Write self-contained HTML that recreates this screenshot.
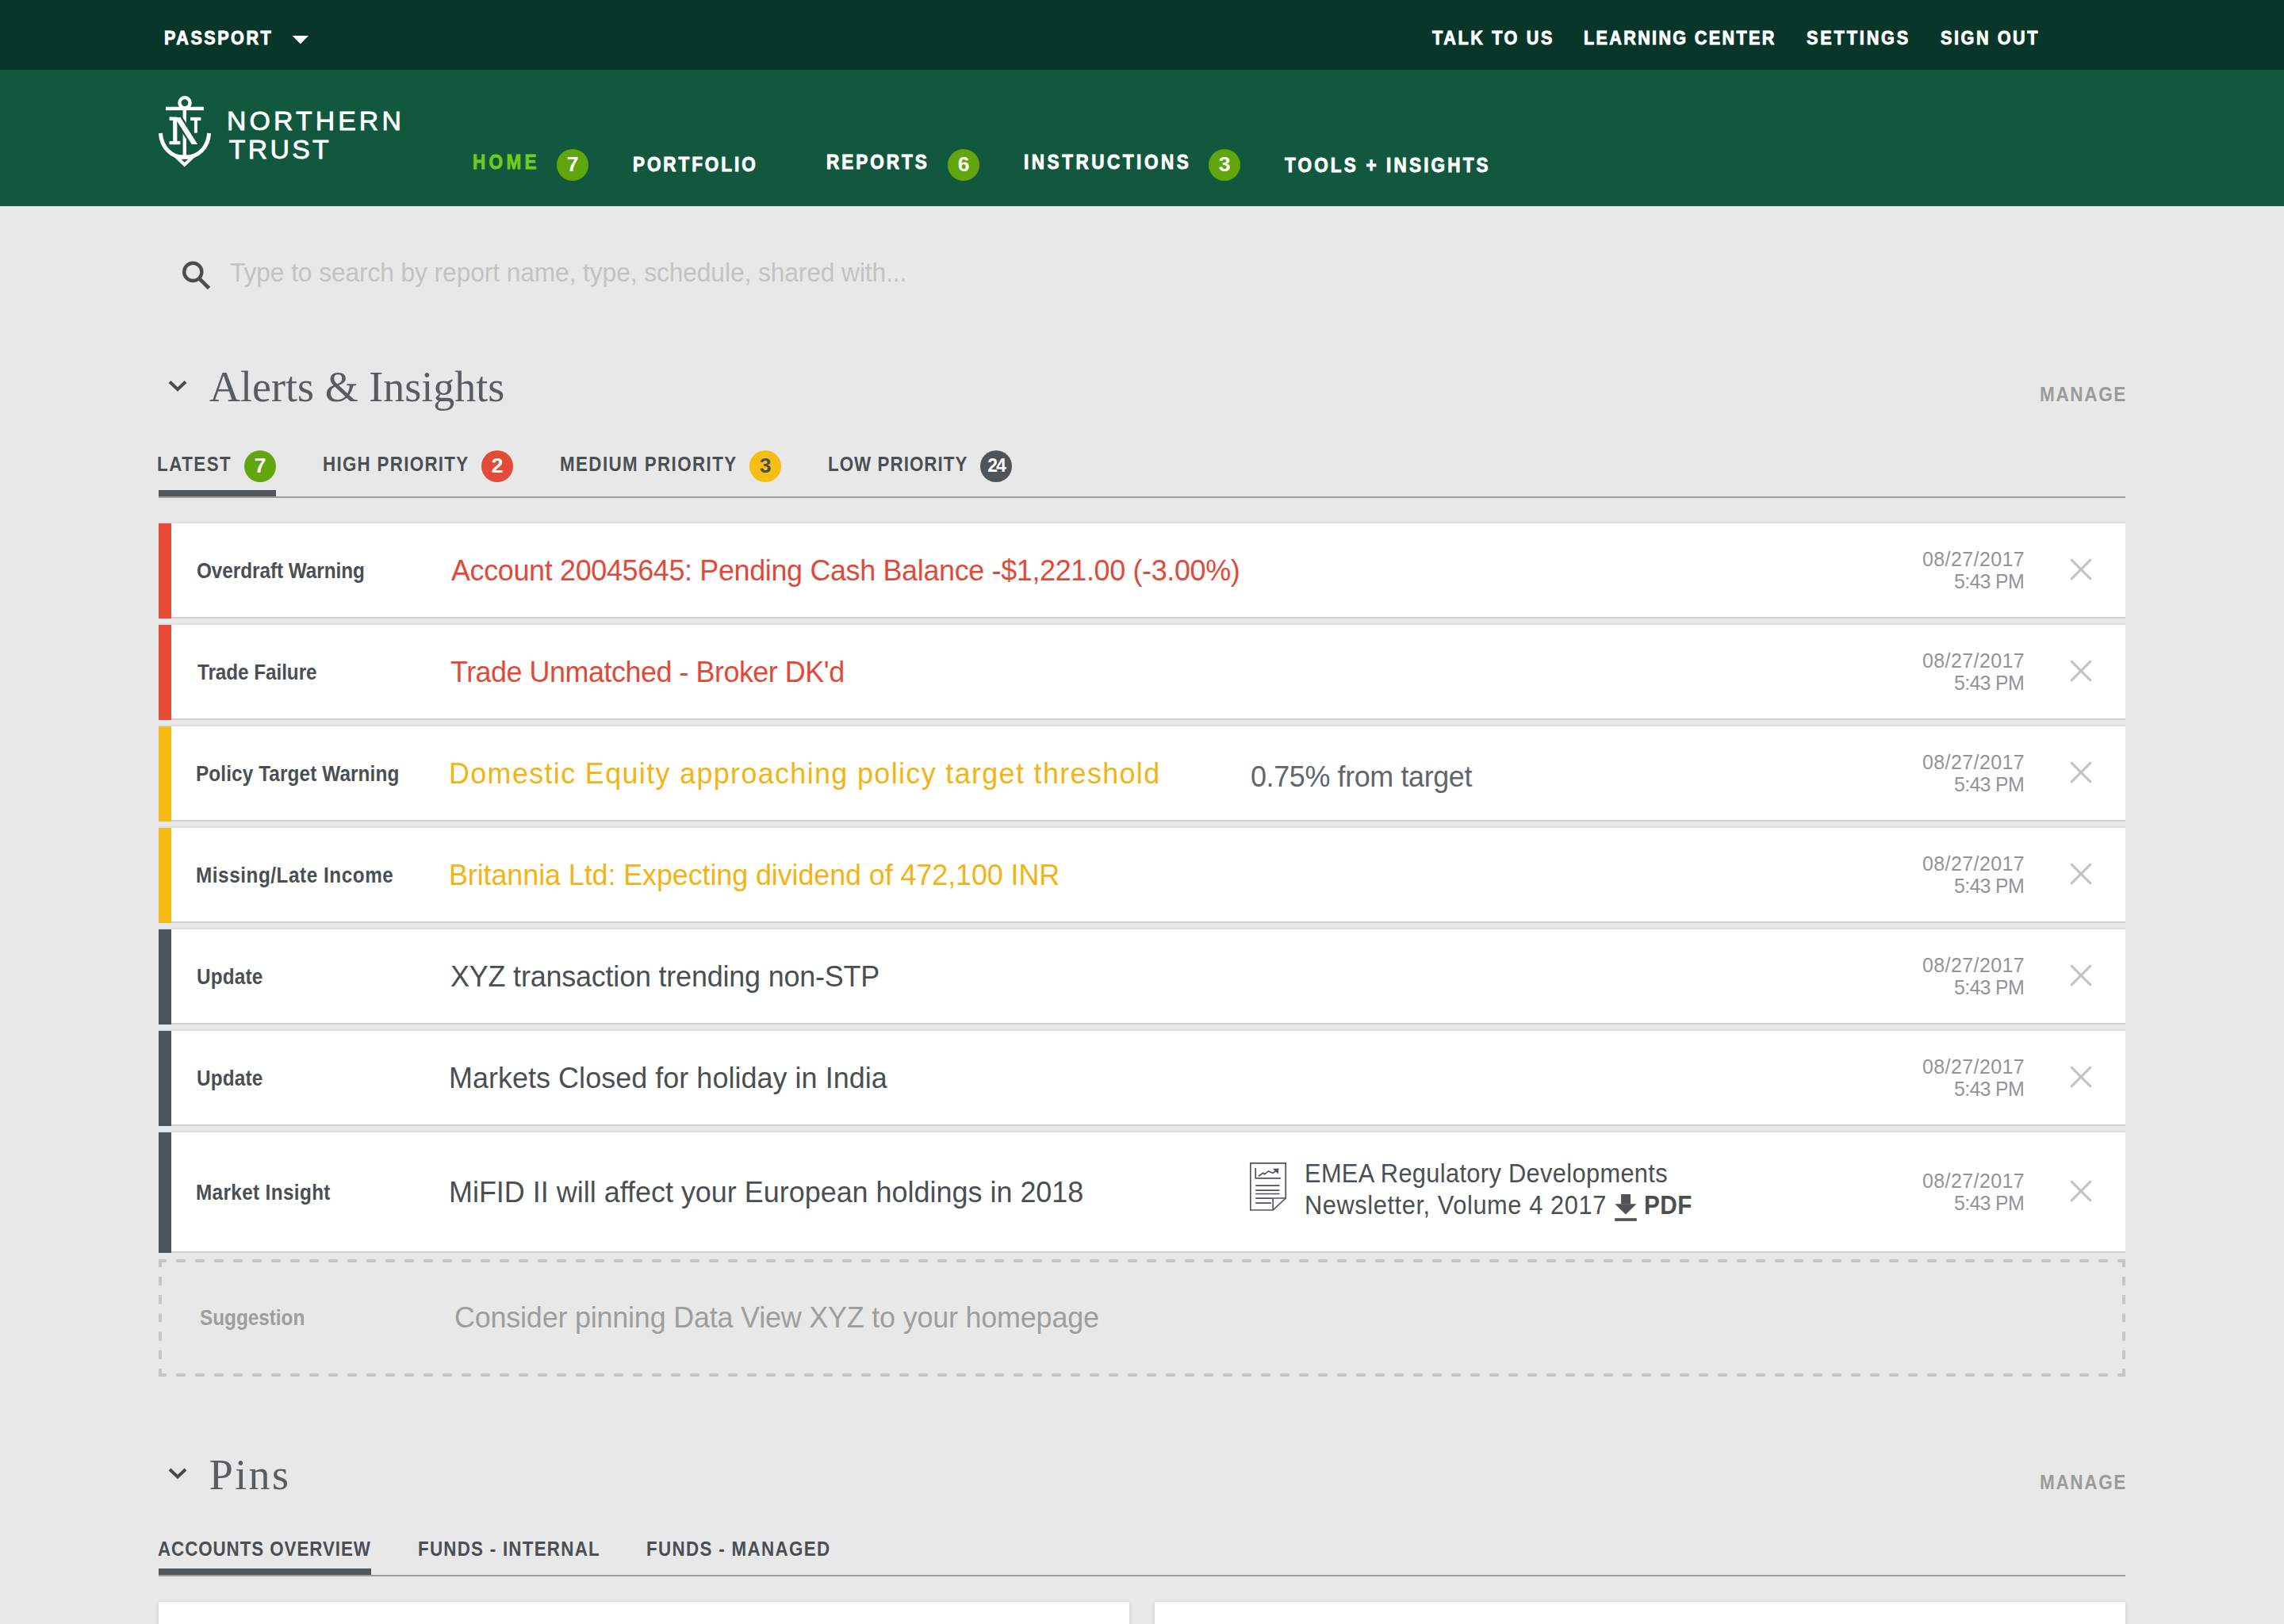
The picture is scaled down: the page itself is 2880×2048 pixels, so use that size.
<!DOCTYPE html>
<html><head><meta charset="utf-8"><title>Northern Trust Passport</title>
<style>
html,body{margin:0;padding:0}
body{width:2880px;height:2048px;overflow:hidden;background:#e8e8e8;position:relative;font-family:'Liberation Sans',sans-serif}
.t{position:absolute;line-height:1;white-space:nowrap}
.r{position:absolute}
.row{position:absolute;left:200px;width:2480px;background:#fff;box-shadow:0 2px 0 #d1d1d1,0 -2px 0 #e0e0e0}
.bar{position:absolute;left:0;top:0;width:16px;bottom:-2px}
.badge{position:absolute;width:40px;height:40px;border-radius:50%}
svg{position:absolute;left:0;top:0;overflow:visible}
@media (max-width:2000px){html{zoom:0.5}}
</style></head><body>
<div class="r" style="left:0;top:0;width:2880px;height:88px;background:#08372a"></div>
<div class="r" style="left:0;top:88px;width:2880px;height:172px;background:#12583f"></div>

<div class="row" style="top:660px;height:118px"><div class="bar" style="background:#e54b37"></div></div>
<div class="row" style="top:788px;height:118px"><div class="bar" style="background:#e54b37"></div></div>
<div class="row" style="top:916px;height:118px"><div class="bar" style="background:#f7bb16"></div></div>
<div class="row" style="top:1044px;height:118px"><div class="bar" style="background:#f7bb16"></div></div>
<div class="row" style="top:1172px;height:118px"><div class="bar" style="background:#4f5459"></div></div>
<div class="row" style="top:1300px;height:118px"><div class="bar" style="background:#4f5459"></div></div>
<div class="row" style="top:1428px;height:150px"><div class="bar" style="background:#4f5459"></div></div>
<div class="r" style="left:200px;top:2020px;width:1224px;height:60px;background:#fff;box-shadow:0 3px 6px rgba(0,0,0,0.14),0 -1px 1px rgba(0,0,0,0.04)"></div>
<div class="r" style="left:1456px;top:2020px;width:1224px;height:60px;background:#fff;box-shadow:0 3px 6px rgba(0,0,0,0.14),0 -1px 1px rgba(0,0,0,0.04)"></div>
<div class="r" style="left:200px;top:626px;width:2480px;height:2px;background:#9d9d9d"></div>
<div class="r" style="left:200px;top:618px;width:148px;height:8px;background:#53575c"></div>
<div class="r" style="left:200px;top:1986px;width:2480px;height:2px;background:#9d9d9d"></div>
<div class="r" style="left:200px;top:1978px;width:268px;height:8px;background:#53575c"></div>
<div class="badge" style="left:702px;top:188px;background:#62a60e"></div>
<div class="t" style="left:692px;top:187px;width:60px;height:40px;line-height:40px;text-align:center;font-weight:700;font-size:26.5px;letter-spacing:0px;color:#fff">7</div>
<div class="badge" style="left:1195px;top:188px;background:#62a60e"></div>
<div class="t" style="left:1185px;top:187px;width:60px;height:40px;line-height:40px;text-align:center;font-weight:700;font-size:26.5px;letter-spacing:0px;color:#fff">6</div>
<div class="badge" style="left:1524px;top:188px;background:#62a60e"></div>
<div class="t" style="left:1514px;top:187px;width:60px;height:40px;line-height:40px;text-align:center;font-weight:700;font-size:26.5px;letter-spacing:0px;color:#fff">3</div>
<div class="badge" style="left:308px;top:568px;background:#62a70f"></div>
<div class="t" style="left:298px;top:567px;width:60px;height:40px;line-height:40px;text-align:center;font-weight:700;font-size:26.5px;letter-spacing:0px;color:#fff">7</div>
<div class="badge" style="left:607.2px;top:568px;background:#e24b37"></div>
<div class="t" style="left:597.2px;top:567px;width:60px;height:40px;line-height:40px;text-align:center;font-weight:700;font-size:26.5px;letter-spacing:0px;color:#fff">2</div>
<div class="badge" style="left:945px;top:568px;background:#f6be15"></div>
<div class="t" style="left:935px;top:567px;width:60px;height:40px;line-height:40px;text-align:center;font-weight:700;font-size:26.5px;letter-spacing:0px;color:#4a4f54">3</div>
<div class="badge" style="left:1236px;top:568px;background:#505459"></div>
<div class="t" style="left:1226px;top:567px;width:60px;height:40px;line-height:40px;text-align:center;font-weight:700;font-size:23px;letter-spacing:-2px;color:#fff">24</div>
<svg width="2880" height="2048" viewBox="0 0 2880 2048"><g stroke="#c6c6c6" stroke-width="4" fill="none"><line x1="200" y1="1590" x2="2680" y2="1590" stroke-dasharray="12 12" stroke-dashoffset="2"/><line x1="200" y1="1734" x2="2680" y2="1734" stroke-dasharray="12 12" stroke-dashoffset="2"/><line x1="202" y1="1588" x2="202" y2="1736" stroke-dasharray="10 11.9 11.3 11.9 11.3 11.9 11.3 11.9 11.3 11.9 11.3 11.9 10"/><line x1="2678" y1="1588" x2="2678" y2="1736" stroke-dasharray="10 11.9 11.3 11.9 11.3 11.9 11.3 11.9 11.3 11.9 11.3 11.9 10"/></g><polygon points="368.6,45 389,45 378.8,55.5" fill="#fff"/><circle cx="243.3" cy="342.9" r="11.1" fill="none" stroke="#4a4d50" stroke-width="4.4"/><line x1="251.5" y1="351.5" x2="263.5" y2="363.5" stroke="#4a4d50" stroke-width="4.6"/><polyline points="214,481.5 224,491 234,481.5" fill="none" stroke="#47494c" stroke-width="4"/><polyline points="214,1853 224,1862.5 234,1853" fill="none" stroke="#47494c" stroke-width="4"/><path d="M2611.4,705.4L2636.6,730.6M2636.6,705.4L2611.4,730.6" stroke="#c4c4c4" stroke-width="3.2"/><path d="M2611.4,833.4L2636.6,858.6M2636.6,833.4L2611.4,858.6" stroke="#c4c4c4" stroke-width="3.2"/><path d="M2611.4,961.4L2636.6,986.6M2636.6,961.4L2611.4,986.6" stroke="#c4c4c4" stroke-width="3.2"/><path d="M2611.4,1089.4L2636.6,1114.6M2636.6,1089.4L2611.4,1114.6" stroke="#c4c4c4" stroke-width="3.2"/><path d="M2611.4,1217.4L2636.6,1242.6M2636.6,1217.4L2611.4,1242.6" stroke="#c4c4c4" stroke-width="3.2"/><path d="M2611.4,1345.4L2636.6,1370.6M2636.6,1345.4L2611.4,1370.6" stroke="#c4c4c4" stroke-width="3.2"/><path d="M2611.4,1489.4L2636.6,1514.6M2636.6,1489.4L2611.4,1514.6" stroke="#c4c4c4" stroke-width="3.2"/><g transform="translate(1566,1456)" fill="none" stroke="#505357" stroke-width="1.7"><path d="M10.8,10.8H55.2V55L39.2,70H10.8Z"/><path d="M39.2,70V55H55.2"/><path d="M17.2,17V29.8H48.8"/><polyline points="20.9,27.3 26.6,23.2 28.6,24.6 33.5,20.9 38.9,23.4 43.5,20.3"/><path d="M40.8,18.6L45.5,18.4L45,22.6Z" fill="#505357"/><path d="M17.2,39.2H47.5M17.2,45.1H47.5M17.2,49.5H47.5M17.2,55.2H38.5M17.2,61.1H36.9"/></g><g fill="#505459"><rect x="2044.1" y="1506" width="11.9" height="12.5"/><polygon points="2036.2,1518.3 2063.6,1518.3 2049.9,1531.5"/><rect x="2036.2" y="1536.2" width="27.6" height="3.7"/></g><g transform="translate(190,110)" fill="#fff"><circle cx="43" cy="19.6" r="6.6" fill="none" stroke="#fff" stroke-width="4.4"/><rect x="19" y="24.7" width="48" height="4.4"/><rect x="40.6" y="29" width="4.4" height="60"/><rect x="28.4" y="37.9" width="4.8" height="30.5"/><rect x="23.7" y="37.6" width="9.8" height="4"/><rect x="23.7" y="68.1" width="13.5" height="4"/><polygon points="30.3,37.9 37.3,37.9 59,72.1 52,72.1" stroke="#12583f" stroke-width="5" paint-order="stroke"/><rect x="23.7" y="37.6" width="9.8" height="4"/><rect x="28.4" y="37.9" width="4.8" height="30.5"/><rect x="23.7" y="68.1" width="13.5" height="4"/><polygon points="30.3,37.9 37.3,37.9 59,72.1 52,72.1"/><rect x="50.1" y="37.9" width="13.2" height="4.1"/><rect x="54.9" y="42" width="4" height="15.6"/><path d="M12.4,58 C13.5,76 26,88.5 43,88.5 C60,88.5 72.5,76 73.6,58" fill="none" stroke="#fff" stroke-width="5"/><polygon points="27,85.5 58.5,85.5 42.7,100.6"/><polygon points="38.6,90.7 47.4,90.7 42.7,94.8" fill="#12583f"/></g></svg>
<div class="t" style="left:207.4px;top:36.0px;transform:scaleX(0.9);transform-origin:0 0;font-family:'Liberation Sans', sans-serif;font-weight:700;font-size:24px;letter-spacing:2.778px;color:#fff;-webkit-text-stroke:0.9px #fff">PASSPORT</div>
<div class="t" style="left:1806.0px;top:36.0px;transform:scaleX(0.9);transform-origin:0 0;font-family:'Liberation Sans', sans-serif;font-weight:700;font-size:24px;letter-spacing:2.926px;color:#fff;-webkit-text-stroke:0.9px #fff">TALK TO US</div>
<div class="t" style="left:1997.0px;top:36.0px;transform:scaleX(0.9);transform-origin:0 0;font-family:'Liberation Sans', sans-serif;font-weight:700;font-size:24px;letter-spacing:2.595px;color:#fff;-webkit-text-stroke:0.9px #fff">LEARNING CENTER</div>
<div class="t" style="left:2278.4px;top:36.0px;transform:scaleX(0.9);transform-origin:0 0;font-family:'Liberation Sans', sans-serif;font-weight:700;font-size:24px;letter-spacing:3.206px;color:#fff;-webkit-text-stroke:0.9px #fff">SETTINGS</div>
<div class="t" style="left:2447.0px;top:36.0px;transform:scaleX(0.9);transform-origin:0 0;font-family:'Liberation Sans', sans-serif;font-weight:700;font-size:24px;letter-spacing:2.857px;color:#fff;-webkit-text-stroke:0.9px #fff">SIGN OUT</div>
<div class="t" style="left:596.0px;top:192.1px;transform:scaleX(0.9);transform-origin:0 0;font-family:'Liberation Sans', sans-serif;font-weight:700;font-size:25px;letter-spacing:4.815px;color:#6fcb1c;-webkit-text-stroke:0.9px #6fcb1c">HOME</div>
<div class="t" style="left:798.0px;top:195.0px;transform:scaleX(0.9);transform-origin:0 0;font-family:'Liberation Sans', sans-serif;font-weight:700;font-size:25px;letter-spacing:3.250px;color:#fff;-webkit-text-stroke:0.9px #fff">PORTFOLIO</div>
<div class="t" style="left:1042.3px;top:192.0px;transform:scaleX(0.9);transform-origin:0 0;font-family:'Liberation Sans', sans-serif;font-weight:700;font-size:25px;letter-spacing:3.333px;color:#fff;-webkit-text-stroke:0.9px #fff">REPORTS</div>
<div class="t" style="left:1290.6px;top:192.0px;transform:scaleX(0.9);transform-origin:0 0;font-family:'Liberation Sans', sans-serif;font-weight:700;font-size:25px;letter-spacing:3.939px;color:#fff;-webkit-text-stroke:0.9px #fff">INSTRUCTIONS</div>
<div class="t" style="left:1619.7px;top:195.5px;transform:scaleX(0.9);transform-origin:0 0;font-family:'Liberation Sans', sans-serif;font-weight:700;font-size:25px;letter-spacing:3.526px;color:#fff;-webkit-text-stroke:0.9px #fff">TOOLS + INSIGHTS</div>
<div class="t" style="left:286.0px;top:135.6px;font-family:'Liberation Sans', sans-serif;font-weight:400;font-size:33.8px;letter-spacing:4.129px;color:#fff;-webkit-text-stroke:0.8px #fff">NORTHERN</div>
<div class="t" style="left:288.8px;top:171.9px;font-family:'Liberation Sans', sans-serif;font-weight:400;font-size:33.8px;letter-spacing:3.300px;color:#fff;-webkit-text-stroke:0.8px #fff">TRUST</div>
<div class="t" style="left:289.5px;top:326.5px;transform:scaleX(0.95);transform-origin:0 0;font-family:'Liberation Sans', sans-serif;font-weight:400;font-size:33.4px;letter-spacing:-0.093px;color:#c3c3c3;">Type to search by report name, type, schedule, shared with...</div>
<div class="t" style="left:264.1px;top:461.0px;font-family:'Liberation Serif', serif;font-weight:400;font-size:54px;letter-spacing:0.015px;color:#585d62;">Alerts &amp; Insights</div>
<div class="t" style="left:2571.7px;top:484.8px;transform:scaleX(0.88);transform-origin:0 0;font-family:'Liberation Sans', sans-serif;font-weight:700;font-size:25.6px;letter-spacing:1.886px;color:#9b9b9b;">MANAGE</div>
<div class="t" style="left:198.3px;top:573.0px;transform:scaleX(0.88);transform-origin:0 0;font-family:'Liberation Sans', sans-serif;font-weight:700;font-size:25.4px;letter-spacing:1.705px;color:#4a4f54;">LATEST</div>
<div class="t" style="left:407.0px;top:573.0px;transform:scaleX(0.88);transform-origin:0 0;font-family:'Liberation Sans', sans-serif;font-weight:700;font-size:25.4px;letter-spacing:1.477px;color:#4a4f54;">HIGH PRIORITY</div>
<div class="t" style="left:705.9px;top:573.0px;transform:scaleX(0.88);transform-origin:0 0;font-family:'Liberation Sans', sans-serif;font-weight:700;font-size:25.4px;letter-spacing:1.607px;color:#4a4f54;">MEDIUM PRIORITY</div>
<div class="t" style="left:1044.0px;top:573.0px;transform:scaleX(0.88);transform-origin:0 0;font-family:'Liberation Sans', sans-serif;font-weight:700;font-size:25.4px;letter-spacing:1.188px;color:#4a4f54;">LOW PRIORITY</div>
<div class="t" style="left:247.5px;top:707.0px;transform:scaleX(0.9);transform-origin:0 0;font-family:'Liberation Sans', sans-serif;font-weight:700;font-size:27px;letter-spacing:-0.035px;color:#4a4f54;">Overdraft Warning</div>
<div class="t" style="left:568.6px;top:701.2px;transform:scaleX(0.95);transform-origin:0 0;font-family:'Liberation Sans', sans-serif;font-weight:400;font-size:37.8px;letter-spacing:-0.356px;color:#e04a38;">Account 20045645: Pending Cash Balance -$1,221.00 (-3.00%)</div>
<div class="t" style="left:2423.9px;top:692.0px;transform:scaleX(0.95);transform-origin:0 0;font-family:'Liberation Sans', sans-serif;font-weight:400;font-size:26.2px;letter-spacing:0.480px;color:#929497;">08/27/2017</div>
<div class="t" style="left:2464.0px;top:719.5px;transform:scaleX(0.95);transform-origin:0 0;font-family:'Liberation Sans', sans-serif;font-weight:400;font-size:26.2px;letter-spacing:-0.702px;color:#929497;">5:43 PM</div>
<div class="t" style="left:248.5px;top:835.0px;transform:scaleX(0.9);transform-origin:0 0;font-family:'Liberation Sans', sans-serif;font-weight:700;font-size:27px;letter-spacing:-0.065px;color:#4a4f54;">Trade Failure</div>
<div class="t" style="left:567.6px;top:829.2px;transform:scaleX(0.95);transform-origin:0 0;font-family:'Liberation Sans', sans-serif;font-weight:400;font-size:37.8px;letter-spacing:-0.500px;color:#e04a38;">Trade Unmatched - Broker DK'd</div>
<div class="t" style="left:2423.9px;top:820.0px;transform:scaleX(0.95);transform-origin:0 0;font-family:'Liberation Sans', sans-serif;font-weight:400;font-size:26.2px;letter-spacing:0.480px;color:#929497;">08/27/2017</div>
<div class="t" style="left:2464.0px;top:847.5px;transform:scaleX(0.95);transform-origin:0 0;font-family:'Liberation Sans', sans-serif;font-weight:400;font-size:26.2px;letter-spacing:-0.702px;color:#929497;">5:43 PM</div>
<div class="t" style="left:246.5px;top:963.0px;transform:scaleX(0.9);transform-origin:0 0;font-family:'Liberation Sans', sans-serif;font-weight:700;font-size:27px;letter-spacing:0.133px;color:#4a4f54;">Policy Target Warning</div>
<div class="t" style="left:565.6px;top:957.2px;transform:scaleX(0.95);transform-origin:0 0;font-family:'Liberation Sans', sans-serif;font-weight:400;font-size:37.8px;letter-spacing:1.429px;color:#f2b316;">Domestic Equity approaching policy target threshold</div>
<div class="t" style="left:2423.9px;top:948.0px;transform:scaleX(0.95);transform-origin:0 0;font-family:'Liberation Sans', sans-serif;font-weight:400;font-size:26.2px;letter-spacing:0.480px;color:#929497;">08/27/2017</div>
<div class="t" style="left:2464.0px;top:975.5px;transform:scaleX(0.95);transform-origin:0 0;font-family:'Liberation Sans', sans-serif;font-weight:400;font-size:26.2px;letter-spacing:-0.702px;color:#929497;">5:43 PM</div>
<div class="t" style="left:246.5px;top:1091.0px;transform:scaleX(0.9);transform-origin:0 0;font-family:'Liberation Sans', sans-serif;font-weight:700;font-size:27px;letter-spacing:0.605px;color:#4a4f54;">Missing/Late Income</div>
<div class="t" style="left:565.6px;top:1085.2px;transform:scaleX(0.95);transform-origin:0 0;font-family:'Liberation Sans', sans-serif;font-weight:400;font-size:37.8px;letter-spacing:-0.096px;color:#f2b316;">Britannia Ltd: Expecting dividend of 472,100 INR</div>
<div class="t" style="left:2423.9px;top:1076.0px;transform:scaleX(0.95);transform-origin:0 0;font-family:'Liberation Sans', sans-serif;font-weight:400;font-size:26.2px;letter-spacing:0.480px;color:#929497;">08/27/2017</div>
<div class="t" style="left:2464.0px;top:1103.5px;transform:scaleX(0.95);transform-origin:0 0;font-family:'Liberation Sans', sans-serif;font-weight:400;font-size:26.2px;letter-spacing:-0.702px;color:#929497;">5:43 PM</div>
<div class="t" style="left:247.5px;top:1219.0px;transform:scaleX(0.9);transform-origin:0 0;font-family:'Liberation Sans', sans-serif;font-weight:700;font-size:27px;letter-spacing:0.200px;color:#4a4f54;">Update</div>
<div class="t" style="left:567.6px;top:1213.2px;transform:scaleX(0.95);transform-origin:0 0;font-family:'Liberation Sans', sans-serif;font-weight:400;font-size:37.8px;letter-spacing:-0.190px;color:#4a4f54;">XYZ transaction trending non-STP</div>
<div class="t" style="left:2423.9px;top:1204.0px;transform:scaleX(0.95);transform-origin:0 0;font-family:'Liberation Sans', sans-serif;font-weight:400;font-size:26.2px;letter-spacing:0.480px;color:#929497;">08/27/2017</div>
<div class="t" style="left:2464.0px;top:1231.5px;transform:scaleX(0.95);transform-origin:0 0;font-family:'Liberation Sans', sans-serif;font-weight:400;font-size:26.2px;letter-spacing:-0.702px;color:#929497;">5:43 PM</div>
<div class="t" style="left:247.5px;top:1347.0px;transform:scaleX(0.9);transform-origin:0 0;font-family:'Liberation Sans', sans-serif;font-weight:700;font-size:27px;letter-spacing:0.200px;color:#4a4f54;">Update</div>
<div class="t" style="left:565.6px;top:1341.2px;transform:scaleX(0.95);transform-origin:0 0;font-family:'Liberation Sans', sans-serif;font-weight:400;font-size:37.8px;letter-spacing:0.059px;color:#4a4f54;">Markets Closed for holiday in India</div>
<div class="t" style="left:2423.9px;top:1332.0px;transform:scaleX(0.95);transform-origin:0 0;font-family:'Liberation Sans', sans-serif;font-weight:400;font-size:26.2px;letter-spacing:0.480px;color:#929497;">08/27/2017</div>
<div class="t" style="left:2464.0px;top:1359.5px;transform:scaleX(0.95);transform-origin:0 0;font-family:'Liberation Sans', sans-serif;font-weight:400;font-size:26.2px;letter-spacing:-0.702px;color:#929497;">5:43 PM</div>
<div class="t" style="left:246.5px;top:1491.0px;transform:scaleX(0.9);transform-origin:0 0;font-family:'Liberation Sans', sans-serif;font-weight:700;font-size:27px;letter-spacing:0.402px;color:#4a4f54;">Market Insight</div>
<div class="t" style="left:565.6px;top:1485.2px;transform:scaleX(0.95);transform-origin:0 0;font-family:'Liberation Sans', sans-serif;font-weight:400;font-size:37.8px;letter-spacing:0.013px;color:#4a4f54;">MiFID II will affect your European holdings in 2018</div>
<div class="t" style="left:2423.9px;top:1476.0px;transform:scaleX(0.95);transform-origin:0 0;font-family:'Liberation Sans', sans-serif;font-weight:400;font-size:26.2px;letter-spacing:0.480px;color:#929497;">08/27/2017</div>
<div class="t" style="left:2464.0px;top:1503.5px;transform:scaleX(0.95);transform-origin:0 0;font-family:'Liberation Sans', sans-serif;font-weight:400;font-size:26.2px;letter-spacing:-0.702px;color:#929497;">5:43 PM</div>
<div class="t" style="left:1576.5px;top:960.6px;transform:scaleX(0.95);transform-origin:0 0;font-family:'Liberation Sans', sans-serif;font-weight:400;font-size:37.8px;letter-spacing:-0.395px;color:#62666b;">0.75% from target</div>
<div class="t" style="left:1644.8px;top:1463.6px;transform:scaleX(0.95);transform-origin:0 0;font-family:'Liberation Sans', sans-serif;font-weight:400;font-size:32.4px;letter-spacing:0.370px;color:#4a4f54;">EMEA Regulatory Developments</div>
<div class="t" style="left:1644.8px;top:1504.3px;transform:scaleX(0.95);transform-origin:0 0;font-family:'Liberation Sans', sans-serif;font-weight:400;font-size:32.4px;letter-spacing:0.623px;color:#4a4f54;">Newsletter, Volume 4 2017</div>
<div class="t" style="left:2072.7px;top:1504.3px;transform:scaleX(0.92);transform-origin:0 0;font-family:'Liberation Sans', sans-serif;font-weight:700;font-size:32.4px;letter-spacing:0.435px;color:#4a4f54;">PDF</div>
<div class="t" style="left:251.5px;top:1649.0px;transform:scaleX(0.9);transform-origin:0 0;font-family:'Liberation Sans', sans-serif;font-weight:700;font-size:27px;letter-spacing:0.000px;color:#9e9e9e;">Suggestion</div>
<div class="t" style="left:572.5px;top:1642.7px;transform:scaleX(0.95);transform-origin:0 0;font-family:'Liberation Sans', sans-serif;font-weight:400;font-size:37.8px;letter-spacing:-0.201px;color:#9e9e9e;">Consider pinning Data View XYZ to your homepage</div>
<div class="t" style="left:263.7px;top:1832.6px;font-family:'Liberation Serif', serif;font-weight:400;font-size:54px;letter-spacing:2.433px;color:#585d62;">Pins</div>
<div class="t" style="left:2571.7px;top:1856.7px;transform:scaleX(0.88);transform-origin:0 0;font-family:'Liberation Sans', sans-serif;font-weight:700;font-size:25.6px;letter-spacing:1.886px;color:#9b9b9b;">MANAGE</div>
<div class="t" style="left:199.2px;top:1941.0px;transform:scaleX(0.88);transform-origin:0 0;font-family:'Liberation Sans', sans-serif;font-weight:700;font-size:25.4px;letter-spacing:1.065px;color:#4a4f54;">ACCOUNTS OVERVIEW</div>
<div class="t" style="left:526.6px;top:1941.0px;transform:scaleX(0.88);transform-origin:0 0;font-family:'Liberation Sans', sans-serif;font-weight:700;font-size:25.4px;letter-spacing:1.432px;color:#4a4f54;">FUNDS - INTERNAL</div>
<div class="t" style="left:814.7px;top:1941.0px;transform:scaleX(0.88);transform-origin:0 0;font-family:'Liberation Sans', sans-serif;font-weight:700;font-size:25.4px;letter-spacing:1.534px;color:#4a4f54;">FUNDS - MANAGED</div>
</body></html>
